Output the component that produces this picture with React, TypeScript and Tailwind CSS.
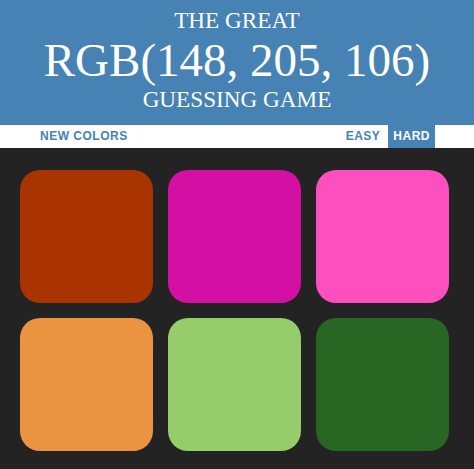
import React from "react";

const squares = [
  "#a93400",
  "#d40fa4",
  "#fe4fbe",
  "#ea9441",
  "#94cd6a",
  "#276623",
];

export default function App() {
  return (
    <div className="min-h-[469px] w-full bg-[#232323]">
      {/* title banner */}
      <h1
        className="m-0 bg-[#4682b4] pt-[8px] pb-[14px] text-center font-normal uppercase text-white"
        style={{ fontFamily: '"Liberation Serif", "Times New Roman", serif' }}
      >
        <div className="text-[23.2px] leading-[25px]">The Great</div>
        <div className="text-[47px] leading-[54px]">RGB(148, 205, 106)</div>
        <div className="text-[23.2px] leading-[24px]">Guessing Game</div>
      </h1>

      {/* controls stripe */}
      <div
        className="flex h-[23px] items-stretch bg-white text-[12px] font-bold uppercase leading-[23px] tracking-[0.5px] text-[#4682b4]"
        style={{ fontFamily: '"Liberation Sans", Arial, sans-serif' }}
      >
        <button className="ml-[35px] px-[5px] uppercase">New Colors</button>
        <div className="flex-1" />
        <button className="px-[5px] uppercase">Easy</button>
        <button className="ml-[3px] mr-[39px] bg-[#4682b4] px-[5px] uppercase text-white">
          Hard
        </button>
      </div>

      {/* colour tiles */}
      <div className="ml-[20px] mt-[22px] grid w-[431px] grid-cols-[133px_133px_133px] gap-x-[15px] gap-y-[15px]">
        {squares.map((c, i) => (
          <div
            key={i}
            className="h-[133px] w-[133px] rounded-[20px]"
            style={{ backgroundColor: c }}
          />
        ))}
      </div>
    </div>
  );
}
